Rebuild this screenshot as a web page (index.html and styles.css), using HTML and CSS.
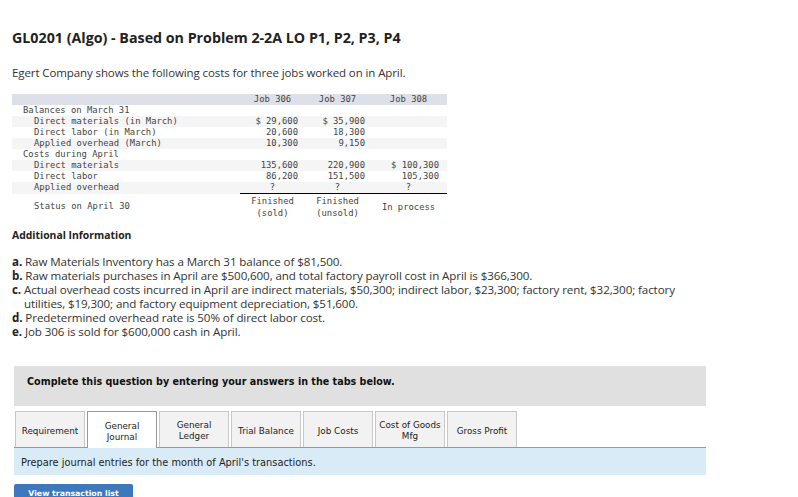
FILE: index.html
```html
<!DOCTYPE html>
<html>
<head>
<meta charset="utf-8">
<link rel="stylesheet" href="styles.css">
</head>
<body>
<div class="page">
  <h1 class="title">GL0201 (Algo) - Based on Problem 2-2A LO P1, P2, P3, P4</h1>
  <p class="intro">Egert Company shows the following costs for three jobs worked on in April.</p>

  <table class="jobs">
    <colgroup>
      <col class="c-label"><col class="c-1"><col class="c-2"><col class="c-3">
    </colgroup>
    <thead>
      <tr><th></th><th>Job 306</th><th>Job 307</th><th>Job 308</th></tr>
    </thead>
    <tbody>
      <tr><td class="l1">Balances on March 31</td><td></td><td></td><td></td></tr>
      <tr class="alt"><td class="l2">Direct materials (in March)</td><td class="n1">$ 29,600</td><td class="n2">$ 35,900</td><td></td></tr>
      <tr><td class="l2">Direct labor (in March)</td><td class="n1">20,600</td><td class="n2">18,300</td><td></td></tr>
      <tr class="alt"><td class="l2">Applied overhead (March)</td><td class="n1">10,300</td><td class="n2">9,150</td><td></td></tr>
      <tr><td class="l1">Costs during April</td><td></td><td></td><td></td></tr>
      <tr class="alt"><td class="l2">Direct materials</td><td class="n1">135,600</td><td class="n2">220,900</td><td class="n3">$ 100,300</td></tr>
      <tr><td class="l2">Direct labor</td><td class="n1">86,200</td><td class="n2">151,500</td><td class="n3">105,300</td></tr>
      <tr class="alt rule"><td class="l2">Applied overhead</td><td class="q">?</td><td class="q">?</td><td class="q">?</td></tr>
      <tr class="status"><td class="l2">Status on April 30</td><td class="s">Finished<br>(sold)</td><td class="s">Finished<br>(unsold)</td><td class="s">In process</td></tr>
    </tbody>
  </table>

  <h2 class="addl">Additional Information</h2>
  <div class="items">
    <p class="item"><b>a.</b> Raw Materials Inventory has a March 31 balance of $81,500.</p>
    <p class="item"><b>b.</b> Raw materials purchases in April are $500,600, and total factory payroll cost in April is $366,300.</p>
    <p class="item"><b>c.</b> Actual overhead costs incurred in April are indirect materials, $50,300; indirect labor, $23,300; factory rent, $32,300; factory utilities, $19,300; and factory equipment depreciation, $51,600.</p>
    <p class="item"><b>d.</b> Predetermined overhead rate is 50% of direct labor cost.</p>
    <p class="item"><b>e.</b> Job 306 is sold for $600,000 cash in April.</p>
  </div>

  <div class="instruct">Complete this question by entering your answers in the tabs below.</div>

  <div class="tabs">
    <div class="tab">Requirement</div>
    <div class="tab active">General<br>Journal</div>
    <div class="tab">General<br>Ledger</div>
    <div class="tab">Trial Balance</div>
    <div class="tab">Job Costs</div>
    <div class="tab">Cost of Goods<br>Mfg</div>
    <div class="tab">Gross Profit</div>
  </div>
  <div class="tabbar">Prepare journal entries for the month of April's transactions.</div>
  <button class="btn">View transaction list</button>
</div>
</body>
</html>
```

FILE: styles.css
```css
html, body { margin: 0; padding: 0; background: #fff; }
.page { padding: 0 0 0 12px; width: 700px; }

.title {
  font-family: "Open Sans", sans-serif;
  font-weight: 700;
  font-size: 14.25px;
  color: #222;
  margin: 0;
  padding-top: 28px;
  line-height: 19px;
}
.intro {
  font-family: "Open Sans", sans-serif;
  font-size: 11.5px;
  color: #333;
  margin: 0;
  padding-top: 19px;
  line-height: 14px;
  letter-spacing: -0.1px;
}

.jobs {
  margin-top: 14px;
  border-collapse: collapse;
  font-family: "DejaVu Sans Mono", monospace;
  font-size: 8.85px;
  color: #444;
  width: 435px;
  table-layout: fixed;
}
.c-label { width: 228px; }
.c-1 { width: 65px; }
.c-2 { width: 65px; }
.c-3 { width: 77px; }
.jobs th {
  background: #dde0e8;
  font-weight: normal;
  height: 11px;
  padding: 0;
  line-height: 11px;
  text-align: center;
}
.jobs td { padding: 0; height: 11px; line-height: 11px; white-space: nowrap; }
.jobs tr.alt td { background: #f5f5f5; }
.l1 { padding-left: 11px !important; }
.l2 { padding-left: 22px !important; }
.n1 { text-align: right; padding-right: 7px !important; }
.n2 { text-align: right; padding-right: 5px !important; }
.n3 { text-align: right; padding-right: 8px !important; }
.q { text-align: center; }
.rule td + td { border-bottom: 1px solid #000; }
.status td { height: 25px; line-height: 12px; }
.s { text-align: center; }

.addl {
  font-family: "Open Sans", sans-serif;
  font-weight: 700;
  font-size: 10.4px;
  color: #222;
  margin: 0;
  padding-top: 9px;
  line-height: 14px;
}
.items { padding-top: 13px; width: 668px; }
.item {
  font-family: "Open Sans", sans-serif;
  font-size: 11.6px;
  color: #333;
  margin: 0;
  line-height: 14px;
  padding-left: 12px;
  text-indent: -12px;
  letter-spacing: -0.1px;
}
.item b { font-weight: 700; color: #222; }

.instruct {
  margin-top: 27px;
  margin-left: 2px;
  background: #e0e0e0;
  height: 40px;
  box-sizing: border-box;
  padding: 10px 0 0 13px;
  font-family: "DejaVu Sans", sans-serif;
  font-weight: 700;
  font-size: 9.6px;
  color: #111;
  width: 692px;
}

.tabs {
  display: flex;
  gap: 2px;
  margin-top: 5px;
  margin-left: 3px;
  height: 36px;
}
.tab {
  width: 70px;
  box-sizing: border-box;
  border: 1px solid #c8c8c8;
  border-bottom: none;
  background: #f2f2f2;
  display: flex;
  align-items: center;
  justify-content: center;
  text-align: center;
  padding-top: 3px;
  font-family: "DejaVu Sans", sans-serif;
  font-size: 8.8px;
  line-height: 11px;
  color: #222;
}
.tab.active {
  background: #fff;
  border-color: #999;
  height: 37px;
  margin-bottom: -1px;
  position: relative;
  z-index: 1;
}
.tabbar {
  margin-left: 2px;
  width: 692px;
  box-sizing: border-box;
  height: 28px;
  border-top: 1px solid #999;
  background: #daebf8;
  font-family: "DejaVu Sans", sans-serif;
  font-size: 9.8px;
  color: #222;
  padding: 9px 0 0 7px;
}
.btn {
  display: block;
  margin: 9px 0 0 2px;
  width: 119px;
  height: 24px;
  border: none;
  border-radius: 2px;
  background: #3d78bf;
  color: #fff;
  font-family: "DejaVu Sans", sans-serif;
  font-weight: 700;
  font-size: 7.8px;
  padding: 0 0 6px;
}
```
